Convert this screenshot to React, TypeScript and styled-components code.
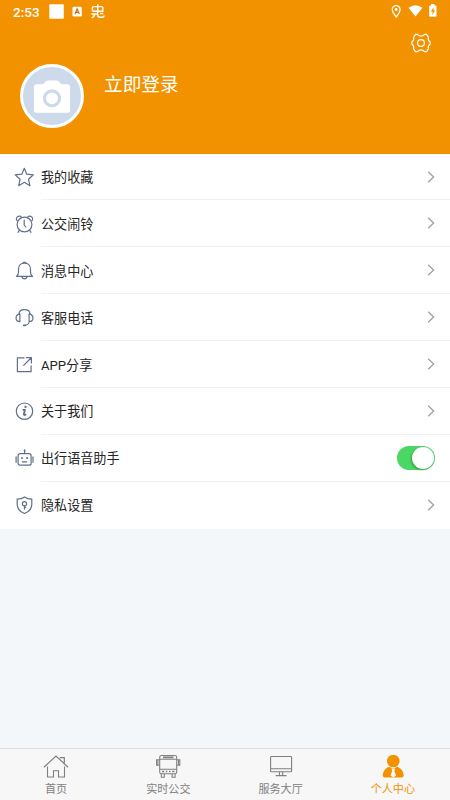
import React from "react";
import styled, { createGlobalStyle } from "styled-components";

const GlobalStyle = createGlobalStyle`
  * { box-sizing: border-box; }
  body {
    margin: 0;
    font-family: Roboto, "Noto Sans CJK SC", sans-serif;
    background: #f3f7f9;
  }
`;

const Screen = styled.div`
  display: flex;
  flex-direction: column;
  width: 450px;
  height: 800px;
  overflow: hidden;
  background: #f3f7f9;
`;

const Header = styled.header`
  display: flex;
  flex-direction: column;
  flex: none;
  height: 153.6px;
  color: #fff;
  background: #f39200;
`;

const StatusBar = styled.div`
  display: flex;
  justify-content: space-between;
  height: 24px;
  padding: 0 12px 0 13px;
`;

const Clock = styled.span`
  width: 36px;
  font-size: 13.5px;
  font-weight: 500;
  line-height: 24px;
`;

const StatusGroup = styled.div`
  display: flex;
`;

const SettingsRow = styled.div`
  display: flex;
  justify-content: flex-end;
  height: 40px;
  padding: 8px 18px 0 0;
`;

const Profile = styled.div`
  display: flex;
  align-items: flex-start;
  gap: 20px;
  padding-left: 20px;
`;

const Avatar = styled.div`
  display: flex;
  align-items: center;
  justify-content: center;
  width: 64px;
  height: 64px;
  margin-top: -0.5px;
  border: 3px solid #fff;
  border-radius: 50%;
  background: #cddaeb;
`;

const LoginLabel = styled.span`
  margin-top: 8px;
  font-size: 18.7px;
  line-height: 27px;
`;

const Menu = styled.main`
  flex: none;
  background: #fff;
`;

const MenuRow = styled.div`
  display: flex;
  align-items: center;
  height: 46.9px;
  padding-left: 14px;
`;

const RowBody = styled.div<{ $last: boolean }>`
  display: flex;
  flex: 1;
  align-items: center;
  justify-content: space-between;
  height: 100%;
  margin-left: 7px;
  padding-right: 14px;
  border-bottom: 1px solid ${(p) => (p.$last ? "transparent" : "#f2f2f2")};
`;

const RowLabel = styled.span`
  padding-top: 3px;
  font-size: 13.1px;
  line-height: 20px;
  color: #252525;
`;

const Switch = styled.span`
  display: flex;
  justify-content: flex-end;
  width: 38px;
  height: 24px;
  margin-top: 1px;
  margin-right: 1px;
  padding: 1px;
  border-radius: 12px;
  background: #4bd763;
`;

const Knob = styled.span`
  width: 22px;
  height: 22px;
  border-radius: 50%;
  background: #fff;
  box-shadow: -1px 1px 2px rgba(0, 60, 10, 0.35);
`;

const TabBar = styled.nav`
  display: grid;
  grid-template-columns: repeat(4, 1fr);
  flex: none;
  height: 52px;
  margin-top: auto;
  padding-right: 1px;
  border-top: 1px solid #dcdddd;
  background: #f7f7f7;
`;

const Tab = styled.div<{ $active: boolean }>`
  display: flex;
  flex-direction: column;
  align-items: center;
  padding-top: 4px;
  font-size: 11.1px;
  line-height: 16px;
  color: ${(p) => (p.$active ? "#f39200" : "#808080")};
`;

const TabLabel = styled.span`
  margin-top: 3px;
`;

const LineIcon = styled.svg`
  flex: none;
  fill: none;
  stroke: #61708a;
  stroke-width: 1.2;
  stroke-linecap: round;
  stroke-linejoin: round;
`;

const TabIcon = styled.svg`
  flex: none;
  fill: none;
  stroke: currentColor;
  stroke-width: 1.1;
`;

const Plain = styled.svg`
  display: block;
  flex: none;
`;

const Chevron = () => (
  <Plain width="10" height="14" viewBox="0 0 10 14" fill="none" stroke="#a0a0a0" strokeWidth="1.3">
    <path d="M2.2 1.7 7.6 7 2.2 12.3" />
  </Plain>
);

const rows: { label: string; toggle?: boolean; icon: React.ReactNode }[] = [
  {
    label: "我的收藏",
    icon: <path d="M10.3 1.3 12.8 7.2 19.4 7.8 14.5 12.2 15.9 18.7 10.3 15.3 4.7 18.7 6.1 12.2 1.2 7.8 7.8 7.2Z" />,
  },
  {
    label: "公交闹铃",
    icon: (
      <>
        <circle cx="10.5" cy="10.5" r="7.4" />
        <path d="M3 6.7C1.4 4.5 3 1.8 5.7 2.1 6.7 2.2 7.3 2.8 7.5 3.6M18 6.7C19.6 4.5 18 1.8 15.3 2.1 14.3 2.2 13.7 2.8 13.5 3.6M5.3 16.3 4 18.3M15.7 16.3 17 18.3M10.2 6.2V11L11.8 13" />
      </>
    ),
  },
  {
    label: "消息中心",
    icon: (
      <>
        <path d="M2.4 15.4C4 14.3 4.5 13.1 4.5 11.2V8.1C4.5 4.5 7 2.2 10.5 2.2S16.5 4.5 16.5 8.1V11.2C16.5 13.1 17 14.3 18.6 15.4Z" />
        <path d="M9.3 2.1V1.6Q10.5 .7 11.7 1.6V2.1M7.9 15.6Q8.4 17.9 10.5 17.9T13.1 15.6" />
      </>
    ),
  },
  {
    label: "客服电话",
    icon: (
      <>
        <path d="M5 6.5C5 3.6 7.3 1.7 10.5 1.7S16 3.6 16 6.5M5.9 6.2V13.6C.8 13.5.8 6.5 5.9 6.2ZM15.1 6.2V13.6C20.2 13.5 20.2 6.5 15.1 6.2ZM15.3 13.5C14.8 16 13.2 17.2 10.7 17.4" />
        <path d="M9.7 17.3H11.2" strokeWidth="1.7" />
      </>
    ),
  },
  {
    label: "APP分享",
    icon: <path d="M10 2.9H3.4V16.7H17.1V10.8M12.3 2.6H17.4V7.9M17 3 9.7 10.4" />,
  },
  {
    label: "关于我们",
    icon: (
      <>
        <circle cx="10.5" cy="10.2" r="8.2" />
        <path d="M9.3 8.8H11L9.8 13.3Q9.8 14.5 11.6 13.6" strokeWidth="1.8" />
        <circle cx="11.4" cy="5.9" r="0.7" strokeWidth="1" fill="#61708a" />
      </>
    ),
  },
  {
    label: "出行语音助手",
    toggle: true,
    icon: (
      <>
        <rect x="4.1" y="5.7" width="13" height="11.5" rx="2" />
        <path d="M10.6 5.5V3M2.1 8.8V14.3M19 8.8V14.3M8.4 13.8H12.8" />
        <path d="M10.6 2.2V2.5M8 9.9V10.2M13.1 9.9V10.2" strokeWidth="1.8" />
      </>
    ),
  },
  {
    label: "隐私设置",
    icon: (
      <>
        <path d="M10.5 1.9Q13.3 4 17.8 4.2V9.6C17.8 14.1 14.7 16.8 10.5 18.5 6.3 16.8 3.2 14.1 3.2 9.6V4.2Q7.7 4 10.5 1.9Z" />
        <circle cx="10.5" cy="8.7" r="2.1" />
        <path d="M10.5 10.9V14.1M10.5 12.4H11.6" />
      </>
    ),
  },
];

const tabs: { label: string; active?: boolean; icon: React.ReactNode }[] = [
  {
    label: "首页",
    icon: (
      <>
        <path d="M2 14.2 14 3 26 14.2M17.8 4.7H22.3V10.5" strokeWidth="1.2" />
        <path d="M5.5 13.6V24H11.5V17.8H16.5V24H22.5V13.6" />
      </>
    ),
  },
  {
    label: "实时公交",
    icon: (
      <>
        <rect x="5.7" y="2.5" width="17" height="18.2" rx="1.8" />
        <path d="M6 6.3H22.4M6 16.2H22.4M5.5 6.8H2.6V12.3H5.5M22.9 6.8H25.8V12.3H22.9M7.3 21V24.2H10.3V21M18.1 21V24.2H21.1V21" />
        <path d="M9 4.4H19.5M8 18.5H10.2M11.8 18.5H13.3M15 18.5H16.5M18.2 18.5H20.5" strokeWidth="1.7" />
        <path d="M3.9 7V12M24.5 7V12" />
      </>
    ),
  },
  {
    label: "服务大厅",
    icon: (
      <>
        <rect x="3.6" y="3.5" width="21" height="15.2" rx="0.7" />
        <path d="M3.6 15.8H24.6M12.5 19V22M15.7 19V22M8.7 22.6H19.5" />
      </>
    ),
  },
  {
    label: "个人中心",
    active: true,
    icon: (
      <g fill="currentColor" stroke="none">
        <ellipse cx="14.3" cy="8" rx="6.3" ry="6.3" />
        <path d="M10 13.7C6 15.2 4 18.5 3.7 22.6Q3.7 24.6 7 24.6H21.4Q24.7 24.6 24.7 22.6C24.4 18.5 22.4 15.2 18.4 13.7L14.3 15.5Z" />
        <path d="M12.5 15.4H16L15.4 18.2 17 22.5 14.3 24.8 11.5 22.5 13.1 18.2Z" fill="#f7f7f7" />
      </g>
    ),
  },
];

export default function App() {
  return (
    <>
      <GlobalStyle />
      <Screen>
        <Header>
          <StatusBar>
            <StatusGroup>
              <Clock>2:53</Clock>
              <Plain width="58" height="24" viewBox="49 0 58 24" fill="none">
                <rect x="49.3" y="4.2" width="14.5" height="14.5" rx="0.8" fill="#fff" />
                <rect x="72.5" y="6.7" width="9.3" height="9.8" rx="1.2" fill="#fff" />
                <path d="M75 14 77.1 8.8 79.3 14M75.8 12.4H78.5" stroke="#c66a05" strokeWidth="1.1" />
                <path d="M93.5 6.6H101.5Q102.8 6.6 102.8 7.8V11.3H93.7Q92.4 11.3 92.4 10V7.8Q92.4 6.6 93.5 6.6ZM97.7 4.2V14.8Q97.7 17.3 100 17.3H102.5Q104 17.3 104.1 15.5M91.3 14H97.7M94.6 14Q94.6 17 91.7 17.8M100 13.5H103.2" stroke="#fff" strokeWidth="1.4" />
              </Plain>
            </StatusGroup>
            <Plain width="48" height="24" viewBox="390 0 48 24" fill="none">
              <path d="M396.2 17C394 14.2 392.3 12 392.3 9.5A3.9 3.9 0 0 1 400.1 9.5C400.1 12 398.4 14.2 396.2 17Z" stroke="#fff" strokeWidth="1.3" />
              <circle cx="396.2" cy="9.5" r="1.4" fill="#fff" />
              <path d="M408.5 7.7Q415.5 2.7 422.5 7.7L415.5 16.6Z" fill="#fff" />
              <path d="M429.2 6.2Q429.2 5.5 430 5.5H431V4H434.4V5.5H435.7Q436.5 5.5 436.5 6.2V16Q436.5 16.8 435.7 16.8H430Q429.2 16.8 429.2 16Z" fill="#fff" />
              <path d="M433.5 7.3 430.9 11.6H432.5V15L435 10.3H433.5Z" fill="#f39200" />
            </Plain>
          </StatusBar>
          <SettingsRow>
            <Plain width="22" height="22" viewBox="0 0 22 22" fill="none" stroke="#fff" strokeWidth="1.2" strokeLinejoin="round">
              <path d="M5.5 2.4H7.4Q9.2 4.2 11 4.2T14.6 2.4H16.5L18.4 5.2Q17.7 8.8 20.1 9.8V12.3Q17.7 13.4 18.4 16.8L16.5 19.6H14.6Q12.8 17.9 11 17.9T7.4 19.6H5.5L3.6 16.8Q4.3 13.4 1.9 12.3V9.8Q4.3 8.8 3.6 5.2Z" />
              <circle cx="11" cy="11" r="3.4" />
            </Plain>
          </SettingsRow>
          <Profile>
            <Avatar>
              <Plain width="38" height="36" viewBox="0 0 38 36">
                <path d="M3.5 6.2H10L13.2 3.1Q13.7 2.6 14.4 2.6H24.2Q24.9 2.6 25.4 3.1L28.4 6.2H34.5Q37 6.2 37 8.7V32.3Q37 34.8 34.5 34.8H3.5Q1 34.8 1 32.3V8.7Q1 6.2 3.5 6.2Z" fill="#fff" />
                <circle cx="19" cy="20.3" r="7.5" fill="none" stroke="#cddaeb" strokeWidth="3.2" />
              </Plain>
            </Avatar>
            <LoginLabel>立即登录</LoginLabel>
          </Profile>
        </Header>
        <Menu>
          {rows.map((row, i) => (
            <MenuRow key={row.label}>
              <LineIcon width="20" height="20" viewBox="0 0 20 20">{row.icon}</LineIcon>
              <RowBody $last={i === rows.length - 1}>
                <RowLabel>{row.label}</RowLabel>
                {row.toggle ? <Switch><Knob /></Switch> : <Chevron />}
              </RowBody>
            </MenuRow>
          ))}
        </Menu>
        <TabBar>
          {tabs.map((tab) => (
            <Tab key={tab.label} $active={!!tab.active}>
              <TabIcon width="28" height="26" viewBox="0 0 28 26">{tab.icon}</TabIcon>
              <TabLabel>{tab.label}</TabLabel>
            </Tab>
          ))}
        </TabBar>
      </Screen>
    </>
  );
}
